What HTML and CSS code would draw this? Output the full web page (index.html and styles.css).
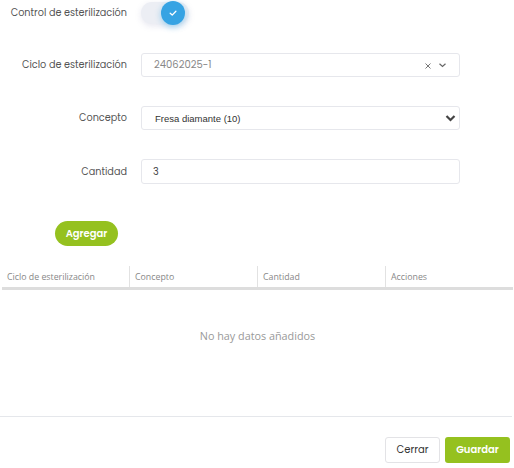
FILE: index.html
```html
<!DOCTYPE html>
<html lang="es">
<head>
<meta charset="utf-8">
<link rel="stylesheet" href="styles.css">
</head>
<body>
<div class="modal">
  <div class="form">
    <label class="lbl">Control de esterilización</label>
    <div class="ctl ctl-toggle">
      <div class="toggle">
        <div class="knob">
          <svg width="10" height="10" viewBox="0 0 10 10"><path d="M2.2 5.3 L4.2 7.1 L7.9 3.2" fill="none" stroke="#fff" stroke-width="1.3" stroke-linecap="round" stroke-linejoin="round"/></svg>
        </div>
      </div>
    </div>

    <label class="lbl">Ciclo de esterilización</label>
    <div class="ctl box combo">
      <span class="combo-val">24062025-1</span>
      <span class="combo-icons">
        <svg width="8" height="8" viewBox="0 0 8 8"><path d="M1.5 1.5 L6.5 6.5 M6.5 1.5 L1.5 6.5" stroke="#777" stroke-width="1" fill="none"/></svg>
        <svg width="9" height="8" viewBox="0 0 9 8"><path d="M1.5 2.8 L4.5 5.5 L7.5 2.8" stroke="#666" stroke-width="1.2" fill="none"/></svg>
      </span>
    </div>

    <label class="lbl">Concepto</label>
    <div class="ctl box select">
      <span class="select-val">Fresa diamante (10)</span>
      <svg width="11" height="8" viewBox="0 0 11 8"><path d="M1.5 2 L5.5 6 L9.5 2" stroke="#444" stroke-width="2.2" fill="none" stroke-linejoin="miter"/></svg>
    </div>

    <label class="lbl">Cantidad</label>
    <div class="ctl box input">3</div>
  </div>

  <div class="add-row">
    <button class="btn-add">Agregar</button>
  </div>

  <div class="table">
    <div class="thead">
      <div class="th">Ciclo de esterilización</div>
      <div class="th">Concepto</div>
      <div class="th">Cantidad</div>
      <div class="th">Acciones</div>
    </div>
    <div class="empty">No hay datos añadidos</div>
  </div>

  <div class="footer">
    <button class="btn btn-close">Cerrar</button>
    <button class="btn btn-save">Guardar</button>
  </div>
</div>
</body>
</html>
```

FILE: styles.css
```css
* { box-sizing: border-box; }
html, body { margin: 0; padding: 0; background: #fff; }
body { width: 514px; height: 468px; overflow: hidden; font-family: "Poppins", "Inter", "Noto Sans", sans-serif; }

.modal { display: flex; flex-direction: column; }

.form {
  display: grid;
  grid-template-columns: 127px 319px;
  column-gap: 14px;
  grid-template-rows: 24px 24px 24px 25px;
  row-gap: 29px;
}

.lbl {
  font-size: 9.7px;
  color: #555;
  text-align: right;
  align-self: center;
  white-space: nowrap;
}
.lbl:first-child { padding-top: 2px; }

.ctl { align-self: stretch; }

.ctl-toggle { display: flex; align-items: center; padding-top: 2px; }
.toggle {
  width: 48px; height: 22px;
  border-radius: 11px;
  background: #eceef4;
  box-shadow: 0 2px 6px rgba(120,120,170,0.18);
  position: relative;
}
.knob {
  position: absolute;
  right: 4px; top: -1px;
  width: 24px; height: 24px;
  border-radius: 50%;
  background: #36a3e3;
  box-shadow: 0 2px 6px rgba(54,163,227,0.45);
  display: flex; align-items: center; justify-content: center;
}

.box {
  border: 1px solid #e6e7ec;
  border-radius: 3px;
  background: #fff;
  display: flex;
  align-items: center;
}

.combo { padding: 0 12px 0 12px; justify-content: space-between; }
.combo-val { font-size: 10px; color: #888; }
.combo-icons { display: flex; align-items: center; gap: 6px; }
.combo-icons svg:first-child { margin-top: 2px; }

.select { padding: 0 3px 0 13px; justify-content: space-between; }
.select-val { font-family: "Liberation Sans", Arial, sans-serif; font-size: 9.5px; color: #333; }

.input { padding-left: 11px; font-size: 9.7px; color: #444; }

.add-row { display: flex; padding-left: 55px; margin-top: 37px; }
.btn-add {
  width: 63px; height: 25px;
  border: none;
  border-radius: 13px;
  background: #95c11f;
  color: #fff;
  font-family: inherit;
  font-size: 10px;
  font-weight: 600;
  padding: 0;
}

.table { margin-top: 20px; padding-left: 2px; padding-right: 1px; }
.thead {
  display: grid;
  grid-template-columns: 127px 128px 128px 128px;
  border-bottom: 3px solid #dddddd;
  height: 24px;
}
.th {
  font-family: "Open Sans", "Noto Sans", sans-serif;
  font-size: 8.8px;
  color: #888;
  padding-left: 5px;
  display: flex;
  align-items: center;
  border-left: 1px solid #e2e2e2;
}
.th:first-child { border-left: none; }

.empty {
  font-family: "Open Sans", "Noto Sans", sans-serif;
  font-size: 10.8px;
  color: #999;
  text-align: center;
  height: 126px;
  padding-top: 38px;
}

.footer {
  border-top: 1px solid #e5e7eb;
  width: 512px;
  display: flex;
  justify-content: flex-end;
  gap: 5px;
  padding: 20px 2px 0 0;
}
.btn {
  height: 26px;
  border-radius: 3px;
  font-family: inherit;
  font-size: 10px;
  padding: 0;
}
.btn-close { width: 55px; background: #fff; border: 1px solid #e3e3e6; color: #333; }
.btn-save { width: 65px; background: #95c11f; border: none; color: #fff; font-weight: 600; }
```
